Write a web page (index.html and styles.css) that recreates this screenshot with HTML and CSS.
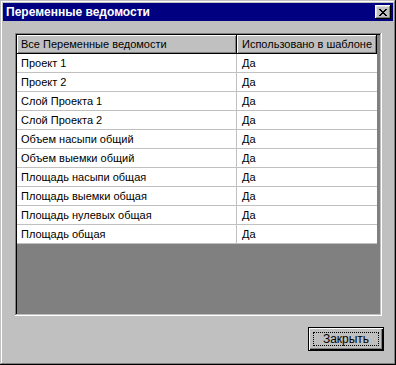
FILE: index.html
```html
<!DOCTYPE html>
<html lang="ru">
<head>
    <meta charset="UTF-8">
    <title>Переменные ведомости</title>
    <link rel="stylesheet" href="styles.css">
</head>
<body>
    <div class="window">
        <div class="titlebar">
            <span class="title">Переменные ведомости</span>
            <button class="close-btn" type="button">
                <svg width="8" height="7" viewBox="0 0 8 7">
                    <path d="M0 0h2v1h1v1h2v-1h1v-1h2v1h-1v1h-1v1h-1v1h1v1h1v1h1v1h-2v-1h-1v-1h-2v1h-1v1h-2v-1h1v-1h1v-1h1v-1h-1v-1h-1v-1h-1z" fill="#000"/>
                </svg>
            </button>
        </div>
        <div class="content">
            <div class="listview">
                <div class="list-header">
                    <div class="hcell col1">Все Переменные ведомости</div>
                    <div class="hcell col2">Использовано в шаблоне</div>
                </div>
                <div class="row"><div class="cell col1">Проект 1</div><div class="cell col2">Да</div></div>
                <div class="row"><div class="cell col1">Проект 2</div><div class="cell col2">Да</div></div>
                <div class="row"><div class="cell col1">Слой Проекта 1</div><div class="cell col2">Да</div></div>
                <div class="row"><div class="cell col1">Слой Проекта 2</div><div class="cell col2">Да</div></div>
                <div class="row"><div class="cell col1">Объем насыпи общий</div><div class="cell col2">Да</div></div>
                <div class="row"><div class="cell col1">Объем выемки общий</div><div class="cell col2">Да</div></div>
                <div class="row"><div class="cell col1">Площадь насыпи общая</div><div class="cell col2">Да</div></div>
                <div class="row"><div class="cell col1">Площадь выемки общая</div><div class="cell col2">Да</div></div>
                <div class="row"><div class="cell col1">Площадь нулевых общая</div><div class="cell col2">Да</div></div>
                <div class="row"><div class="cell col1">Площадь общая</div><div class="cell col2">Да</div></div>
            </div>
            <div class="buttons">
                <button class="btn-default" type="button"><span class="focus">Закрыть</span></button>
            </div>
        </div>
    </div>
</body>
</html>
```

FILE: styles.css
```css
body {
    margin: 0;
    padding: 0;
    font-family: "Liberation Sans", Arial, sans-serif;
    font-size: 11px;
}
.window {
    width: 396px;
    height: 365px;
    box-sizing: border-box;
    padding: 3px;
    background-color: #c0c0c0;
    box-shadow: inset -1px -1px #000, inset 1px 1px #c0c0c0,
                inset -2px -2px #808080, inset 2px 2px #fff;
}
.titlebar {
    height: 18px;
    display: flex;
    align-items: center;
    justify-content: space-between;
    background-color: #000080;
    color: #fff;
    padding-left: 3px;
    padding-right: 2px;
}
.title {
    font-weight: bold;
    font-size: 12px;
}
.close-btn {
    width: 16px;
    height: 14px;
    padding: 0;
    border: none;
    background-color: #c0c0c0;
    display: flex;
    align-items: center;
    justify-content: center;
    box-shadow: inset -1px -1px #000, inset 1px 1px #fff,
                inset -2px -2px #808080, inset 2px 2px #dfdfdf;
}
.content {
    padding: 12px 9px 0 12px;
}
.listview {
    height: 283px;
    margin-right: 2px;
    box-sizing: border-box;
    padding: 2px;
    background-color: #808080;
    box-shadow: inset -1px -1px #fff, inset 1px 1px #808080,
                inset -2px -2px #c0c0c0, inset 2px 2px #000;
}
.list-header, .row {
    display: flex;
    height: 19px;
}
.col1 {
    width: 220px;
    padding-left: 4px;
}
.col2 {
    width: 140px;
    padding-left: 5px;
}
.hcell {
    box-sizing: border-box;
    height: 19px;
    line-height: 18px;
    background-color: #c0c0c0;
    box-shadow: inset -1px -1px #000, inset 1px 1px #fff,
                inset -2px -2px #808080;
    white-space: nowrap;
    overflow: hidden;
}
.cell {
    box-sizing: border-box;
    height: 19px;
    line-height: 18px;
    background-color: #fff;
    border-bottom: 1px solid #c0c0c0;
}
.cell.col1 {
    border-right: 1px solid #c0c0c0;
}
.buttons {
    display: flex;
    justify-content: flex-end;
    margin-top: 11px;
}
.btn-default {
    width: 76px;
    height: 24px;
    padding: 4px;
    border: 1px solid #000;
    background-color: #c0c0c0;
    font-family: "Liberation Sans", Arial, sans-serif;
    font-size: 12px;
    box-shadow: inset 1px 1px #fff, inset -1px -1px #000,
                inset -2px -2px #808080;
}
.focus {
    display: block;
    height: 14px;
    line-height: 13px;
    box-sizing: border-box;
    border: 1px dotted #000;
}
```
